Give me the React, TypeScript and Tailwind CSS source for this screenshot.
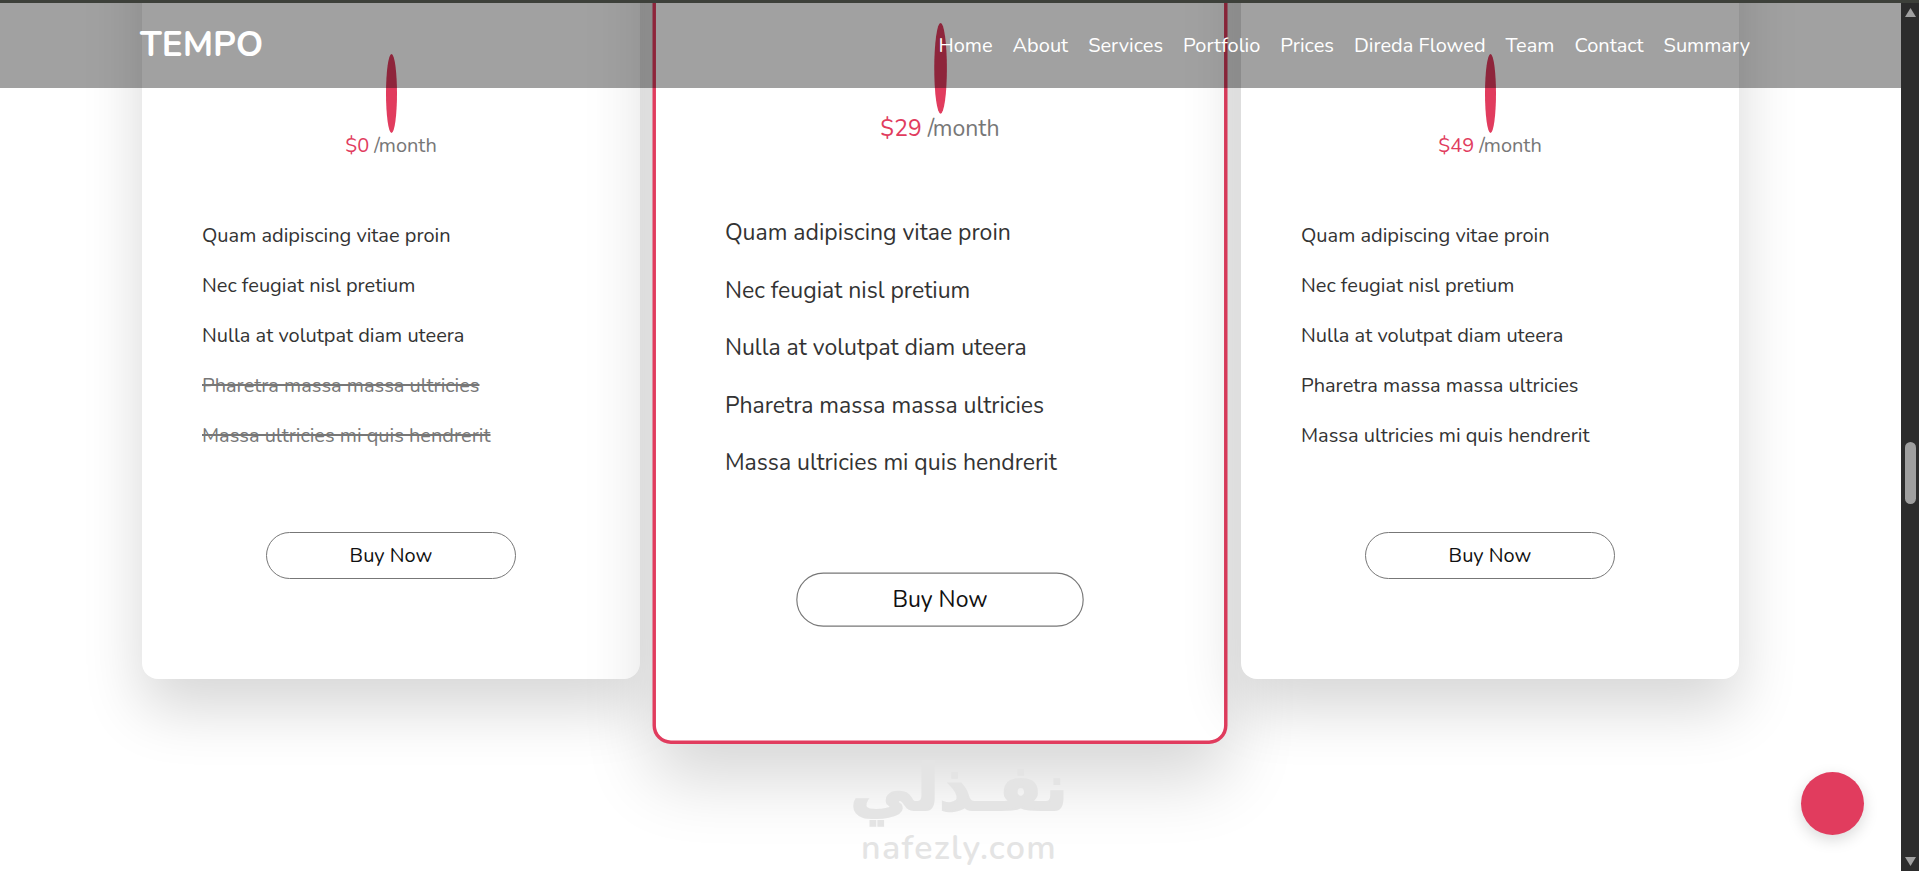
const features = [
  "Quam adipiscing vitae proin",
  "Nec feugiat nisl pretium",
  "Nulla at volutpat diam uteera",
  "Pharetra massa massa ultricies",
  "Massa ultricies mi quis hendrerit",
];

const navLinks = ["Home", "About", "Services", "Portfolio", "Prices", "Direda Flowed", "Team", "Contact", "Summary"];

function PriceCard({ price, disabled = 0, featured = false, last = false }: { price: string; disabled?: number; featured?: boolean; last?: boolean }) {
  return (
    <div
      className={
        "relative h-[866px] shrink-0 rounded-[16px] bg-white shadow-[0_30px_60px_rgba(0,0,0,0.16)] " +
        (featured
          ? "z-10 w-[500px] -translate-x-px scale-[1.15] border-[3px] border-[#e13c5e] pt-[236px]"
          : last
            ? "z-20 w-[498px] pt-[241px]"
            : "w-[498px] pt-[241px]")
      }
    >
      <div className="mx-auto h-[79px] w-[11px] rounded-[50%] bg-[#e13c5e]" />
      <p className="mt-[-1px] text-center text-[20px] leading-[28px] text-[#777777]">
        <span className="text-[#e13c5e]">{price}</span> /month
      </p>
      <ul className={"flex flex-col gap-[20px] pl-[60px] text-[20px] leading-[30px] text-[#333333] " + (featured ? "mt-[62px]" : "mt-[61px]")}>
        {features.map((f, i) => (
          <li key={f} className={i >= features.length - disabled ? "text-[#777777] line-through" : ""}>
            {f}
          </li>
        ))}
      </ul>
      <div className={"flex justify-center " + (featured ? "mt-[80px]" : "mt-[81px]")}>
        <button className="h-[47px] w-[250px] rounded-full border border-[#777777] bg-white text-[20px] text-[#111111]">
          Buy Now
        </button>
      </div>
    </div>
  );
}

export default function App() {
  return (
    <div className="relative flex h-screen w-full overflow-hidden bg-white font-['Nunito','Lato',sans-serif]">
      <div className="relative min-w-0 flex-1 overflow-hidden">
        <main className="ml-[142px] mt-[-187px] flex w-[1597px] justify-between">
          <PriceCard price="$0" disabled={2} />
          <PriceCard price="$29" featured />
          <PriceCard price="$49" last />
        </main>

        {/* fixed header */}
        <header className="absolute inset-x-0 top-[3px] z-30 flex h-[85px] items-center justify-between bg-black/[0.37] pl-[140px] pr-[151px]">
          <span className="text-[35px] font-bold text-white">TEMPO</span>
          <nav className="flex gap-5 pt-[1px] text-[20px] font-normal text-white">
            {navLinks.map((l) => (
              <a key={l}>{l}</a>
            ))}
          </nav>
        </header>

        {/* watermark */}
        <div className="absolute left-[843px] top-[746px] z-30 w-[232px] text-center font-semibold text-[#e4e4e4]">
          <p dir="rtl" className="font-['DejaVu_Sans',sans-serif] text-[64px] font-bold leading-[84px] [-webkit-text-stroke:2px_#e4e4e4]">نفـذلي</p>
          <p className="text-[34px] leading-[36px] tracking-[1.4px]">nafezly.com</p>
        </div>

        <button className="absolute left-[1801px] top-[772px] z-30 h-[63px] w-[63px] rounded-full bg-[#e13c5e] shadow-[0_5px_15px_rgba(0,0,0,0.15)]" />
      </div>

      {/* scrollbar */}
      <div className="flex w-[18px] shrink-0 flex-col items-center justify-between bg-[#2c2c2c] pb-[5px] pt-[8px]">
        <svg width="11" height="9" viewBox="0 0 11 9"><path d="M5.5 0 11 9H0z" fill="#a0a0a0" /></svg>
        <svg width="11" height="9" viewBox="0 0 11 9"><path d="M5.5 9 11 0H0z" fill="#a0a0a0" /></svg>
      </div>
      <div className="absolute left-[1905px] top-[442px] h-[62px] w-[11px] rounded-full bg-[#9f9f9f]" />
      <div className="absolute inset-x-0 top-0 z-40 h-[3px] bg-[#3d403a]" />
    </div>
  );
}
